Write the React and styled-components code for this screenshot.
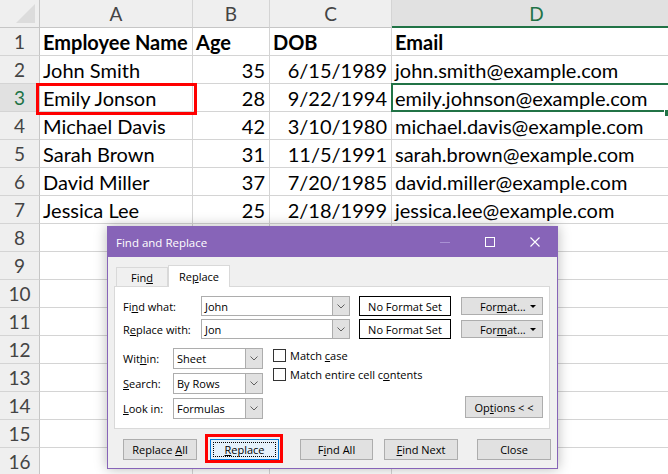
import React from "react";
import styled, { createGlobalStyle } from "styled-components";

const GlobalStyle = createGlobalStyle`
  html, body { margin: 0; padding: 0; background: #fff; }
  body { width: 668px; height: 474px; overflow: hidden; }
`;

const rows = [
  ["Employee Name", "Age", "DOB", "Email"],
  ["John Smith", "35", "6/15/1989", "john.smith@example.com"],
  ["Emily Jonson", "28", "9/22/1994", "emily.johnson@example.com"],
  ["Michael Davis", "42", "3/10/1980", "michael.davis@example.com"],
  ["Sarah Brown", "31", "11/5/1991", "sarah.brown@example.com"],
  ["David Miller", "37", "7/20/1985", "david.miller@example.com"],
  ["Jessica Lee", "25", "2/18/1999", "jessica.lee@example.com"],
];

const App = () => {
  const allRows = [];
  for (let i = 0; i < 16; i++) allRows.push(rows[i] || ["", "", "", ""]);

  return (
    <>
      <GlobalStyle />
      <Sheet>
        <Grid>
          <Corner>
            <CornerMark />
          </Corner>
          {["A", "B", "C", "D"].map((c) => (
            <ColHead key={c} $active={c === "D"}>
              {c}
            </ColHead>
          ))}
          {allRows.map((r, i) => (
            <React.Fragment key={i}>
              <RowHead $active={i === 2}>{i + 1}</RowHead>
              {r.map((v, j) => (
                <Cell
                  key={j}
                  $bold={i === 0}
                  $right={i > 0 && (j === 1 || j === 2)}
                  $selected={i === 2 && j === 3}
                >
                  {v}
                </Cell>
              ))}
            </React.Fragment>
          ))}
        </Grid>
        <FillHandle />
        <RedBox $left={36} $top={83} $w={161} $h={32} />

        <Dialog>
          <TitleBar>
            <Title>Find and Replace</Title>
            <TitleButtons>
              <TitleBtn>
                <svg width="12" height="12" viewBox="0 0 12 12">
                  <line x1="1" y1="6.5" x2="11" y2="6.5" stroke="#a991d4" strokeWidth="1" />
                </svg>
              </TitleBtn>
              <TitleBtn>
                <svg width="12" height="12" viewBox="0 0 12 12">
                  <rect x="1.5" y="1.5" width="9" height="9" fill="none" stroke="#fff" strokeWidth="1" />
                </svg>
              </TitleBtn>
              <TitleBtn>
                <svg width="12" height="12" viewBox="0 0 12 12">
                  <path d="M1.5 1.5 L10.5 10.5 M10.5 1.5 L1.5 10.5" stroke="#fff" strokeWidth="1.1" />
                </svg>
              </TitleBtn>
            </TitleButtons>
          </TitleBar>

          <Body>
            <Tabs>
              <Tab>
                <span>
                  Fin<u>d</u>
                </span>
              </Tab>
              <Tab $active>
                <span>
                  Re<u>p</u>lace
                </span>
              </Tab>
            </Tabs>
            <Panel>
              <FieldRow>
                <Label $w={78}>
                  Fi<u>n</u>d what:
                </Label>
                <Combo $w={149}>
                  <ComboText>John</ComboText>
                  <Chevron />
                </Combo>
                <FormatSet>No Format Set</FormatSet>
                <FormatBtn>
                  <span>
                    For<u>m</u>at...
                  </span>
                  <Caret />
                </FormatBtn>
              </FieldRow>
              <FieldRow>
                <Label $w={78}>
                  R<u>e</u>place with:
                </Label>
                <Combo $w={149}>
                  <ComboText>Jon</ComboText>
                  <Chevron />
                </Combo>
                <FormatSet>No Format Set</FormatSet>
                <FormatBtn>
                  <span>
                    For<u>m</u>at...
                  </span>
                  <Caret />
                </FormatBtn>
              </FieldRow>

              <Options>
                <OptionCol>
                  <SmallRow>
                    <Label $w={50}>
                      Wit<u>h</u>in:
                    </Label>
                    <Combo $w={90} $h={21}>
                      <ComboText>Sheet</ComboText>
                      <Chevron />
                    </Combo>
                  </SmallRow>
                  <SmallRow>
                    <Label $w={50}>
                      <u>S</u>earch:
                    </Label>
                    <Combo $w={90} $h={21}>
                      <ComboText>By Rows</ComboText>
                      <Chevron />
                    </Combo>
                  </SmallRow>
                  <SmallRow>
                    <Label $w={50}>
                      <u>L</u>ook in:
                    </Label>
                    <Combo $w={90} $h={21}>
                      <ComboText>Formulas</ComboText>
                      <Chevron />
                    </Combo>
                  </SmallRow>
                </OptionCol>
                <CheckCol>
                  <CheckRow>
                    <Box />
                    <span>
                      Match <u>c</u>ase
                    </span>
                  </CheckRow>
                  <CheckRow>
                    <Box />
                    <span>
                      Match entire cell c<u>o</u>ntents
                    </span>
                  </CheckRow>
                </CheckCol>
                <OptionsBtn>
                  <span>
                    Op<u>t</u>ions &lt; &lt;
                  </span>
                </OptionsBtn>
              </Options>
            </Panel>

            <ButtonRow>
              <Btn $w={74} $gap={9}>
                <span>
                  Replace <u>A</u>ll
                </span>
              </Btn>
              <Btn $w={69} $gap={13} $focused>
                <span>
                  <u>R</u>eplace
                </span>
              </Btn>
              <Btn $w={73} $gap={21}>
                <span>
                  F<u>i</u>nd All
                </span>
              </Btn>
              <Btn $w={74} $gap={11}>
                <span>
                  <u>F</u>ind Next
                </span>
              </Btn>
              <Btn $w={74} $gap={19}>
                <span>Close</span>
              </Btn>
            </ButtonRow>
          </Body>
        </Dialog>
        <RedBox $left={205} $top={434} $w={78} $h={29} />
      </Sheet>
    </>
  );
};

const Sheet = styled.div`
  position: relative;
  width: 668px;
  height: 474px;
  overflow: hidden;
  font-family: Lato, "Liberation Sans", sans-serif;
`;

const Grid = styled.div`
  display: grid;
  grid-template-columns: 40px 153px 77px 122px 290px;
  grid-template-rows: 28px repeat(16, 28px);
`;

const Corner = styled.div`
  position: relative;
  background: #efefef;
  border-right: 1px solid #c6c6c6;
  border-bottom: 1px solid #c6c6c6;
  box-sizing: border-box;
`;

const CornerMark = styled.div`
  position: absolute;
  right: 4px;
  bottom: 4px;
  width: 0;
  height: 0;
  border-left: 19px solid transparent;
  border-bottom: 19px solid #dcdcdc;
`;

const ColHead = styled.div`
  box-sizing: border-box;
  display: flex;
  align-items: center;
  justify-content: center;
  font-size: 19px;
  color: ${(p) => (p.$active ? "#217346" : "#444")};
  background: ${(p) => (p.$active ? "#e1e1e1" : "#efefef")};
  border-right: 1px solid #d4d4d4;
  border-bottom: ${(p) => (p.$active ? "2px solid #217346" : "1px solid #c6c6c6")};
`;

const RowHead = styled.div`
  box-sizing: border-box;
  display: flex;
  align-items: center;
  justify-content: center;
  font-size: 19px;
  color: ${(p) => (p.$active ? "#217346" : "#444")};
  background: ${(p) => (p.$active ? "#e1e1e1" : "#efefef")};
  border-right: 1px solid #c6c6c6;
  border-bottom: 1px solid #d4d4d4;
`;

const Cell = styled.div`
  box-sizing: border-box;
  position: relative;
  display: flex;
  align-items: flex-end;
  justify-content: ${(p) => (p.$right ? "flex-end" : "flex-start")};
  padding: 0 4px 1px 3px;
  font-size: 20px;
  line-height: 24px;
  font-weight: ${(p) => (p.$bold ? 700 : 400)};
  color: #000;
  white-space: nowrap;
  border-right: 1px solid #d4d4d4;
  border-bottom: 1px solid #d4d4d4;

  &::after {
    content: "";
    display: ${(p) => (p.$selected ? "block" : "none")};
    position: absolute;
    left: -1px;
    top: -1px;
    right: -1px;
    bottom: -1px;
    border: 2px solid #217346;
  }
`;

const FillHandle = styled.div`
  position: absolute;
  left: 664px;
  top: 109px;
  width: 6px;
  height: 6px;
  background: #217346;
  border: 1px solid #fff;
`;

const RedBox = styled.div`
  position: absolute;
  left: ${(p) => p.$left}px;
  top: ${(p) => p.$top}px;
  width: ${(p) => p.$w}px;
  height: ${(p) => p.$h}px;
  box-sizing: border-box;
  border: 3px solid #ff0000;
  pointer-events: none;
`;

const Dialog = styled.div`
  position: absolute;
  left: 107px;
  top: 226px;
  width: 451px;
  height: 243px;
  box-sizing: border-box;
  border: 1px solid #8764b8;
  background: #f0f0f0;
  box-shadow: 0 0 12px rgba(0, 0, 0, 0.28);
  font-family: "Open Sans", "Liberation Sans", sans-serif;
  font-size: 11px;
  color: #000;
  display: flex;
  flex-direction: column;
`;

const TitleBar = styled.div`
  height: 30px;
  background: #8764b8;
  display: flex;
  align-items: center;
  justify-content: space-between;
  padding-left: 8px;
`;

const Title = styled.div`
  color: #fff;
  font-size: 11.5px;
`;

const TitleButtons = styled.div`
  display: flex;
  height: 100%;
`;

const TitleBtn = styled.div`
  width: 45px;
  height: 100%;
  display: flex;
  align-items: center;
  justify-content: center;
`;

const Body = styled.div`
  flex: 1;
  padding: 8px 0 0 6px;
`;

const Tabs = styled.div`
  display: flex;
  align-items: flex-end;
  height: 21px;
  padding-left: 2px;
`;

const Tab = styled.div`
  box-sizing: border-box;
  height: ${(p) => (p.$active ? "22px" : "19px")};
  padding: 0 ${(p) => (p.$active ? "10px" : "14px")};
  display: flex;
  align-items: center;
  background: ${(p) => (p.$active ? "#fff" : "#f0f0f0")};
  border: 1px solid #d9d9d9;
  border-bottom: none;
  margin-bottom: ${(p) => (p.$active ? "-1px" : "0")};
  position: relative;
  z-index: ${(p) => (p.$active ? 1 : 0)};
`;

const Panel = styled.div`
  width: 436px;
  height: 143px;
  box-sizing: border-box;
  background: #fff;
  border: 1px solid #d9d9d9;
  padding: 9px 0 0 8px;
`;

const FieldRow = styled.div`
  display: flex;
  align-items: center;
  height: 20px;
  margin-bottom: 3px;
`;

const Label = styled.div`
  width: ${(p) => p.$w}px;
  flex-shrink: 0;
  white-space: nowrap;
`;

const Combo = styled.div`
  box-sizing: border-box;
  width: ${(p) => p.$w}px;
  height: ${(p) => p.$h || 20}px;
  border: 1px solid #adadad;
  background: #fff;
  display: flex;
  align-items: stretch;
`;

const ComboText = styled.div`
  flex: 1;
  display: flex;
  align-items: center;
  padding-left: 3px;
`;

const ChevronBox = styled.div`
  width: 16px;
  background: #e1e1e1;
  border-left: 1px solid #adadad;
  display: flex;
  align-items: center;
  justify-content: center;
`;

const Chevron = () => (
  <ChevronBox>
    <svg width="8" height="5" viewBox="0 0 8 5">
      <path d="M0.5 0.5 L4 4 L7.5 0.5" fill="none" stroke="#606060" strokeWidth="1" />
    </svg>
  </ChevronBox>
);

const FormatSet = styled.div`
  box-sizing: border-box;
  width: 92px;
  height: 20px;
  margin-left: 9px;
  border: 1px solid #000;
  display: flex;
  align-items: center;
  justify-content: center;
  white-space: nowrap;
`;

const FormatBtn = styled.div`
  box-sizing: border-box;
  width: 82px;
  height: 18px;
  margin-left: 10px;
  background: #e1e1e1;
  border: 1px solid #adadad;
  display: flex;
  align-items: center;
  padding-left: 18px;
  position: relative;
`;

const Caret = styled.span`
  position: absolute;
  right: 6px;
  top: 7px;
  width: 0;
  height: 0;
  border-left: 3px solid transparent;
  border-right: 3px solid transparent;
  border-top: 3px solid #000;
`;

const Options = styled.div`
  display: flex;
  margin-top: 9px;
`;

const OptionCol = styled.div`
  display: flex;
  flex-direction: column;
  gap: 4px;
`;

const SmallRow = styled.div`
  display: flex;
  align-items: center;
`;

const CheckCol = styled.div`
  display: flex;
  flex-direction: column;
  gap: 6px;
  margin-left: 10px;
  padding-top: 1px;
`;

const CheckRow = styled.div`
  display: flex;
  align-items: center;
  height: 13px;
  white-space: nowrap;
`;

const Box = styled.span`
  box-sizing: border-box;
  width: 13px;
  height: 13px;
  border: 1px solid #333;
  background: #fff;
  margin-right: 4px;
`;

const OptionsBtn = styled.div`
  box-sizing: border-box;
  align-self: flex-end;
  margin-left: auto;
  margin-right: 6px;
  width: 78px;
  height: 22px;
  background: #e1e1e1;
  border: 1px solid #adadad;
  display: flex;
  align-items: center;
  justify-content: center;
  margin-bottom: 1px;
`;

const ButtonRow = styled.div`
  display: flex;
  margin-top: 10px;
`;

const Btn = styled.div`
  box-sizing: border-box;
  width: ${(p) => p.$w}px;
  height: 21px;
  margin-left: ${(p) => p.$gap}px;
  background: ${(p) => (p.$focused ? "#e5f1fb" : "#e1e1e1")};
  border: 1px solid ${(p) => (p.$focused ? "#0078d7" : "#adadad")};
  display: flex;
  align-items: center;
  justify-content: center;
  white-space: nowrap;
  position: relative;

  &::after {
    content: "";
    display: ${(p) => (p.$focused ? "block" : "none")};
    position: absolute;
    inset: 2px;
    border: 1px dotted #000;
  }
`;

export default App;
